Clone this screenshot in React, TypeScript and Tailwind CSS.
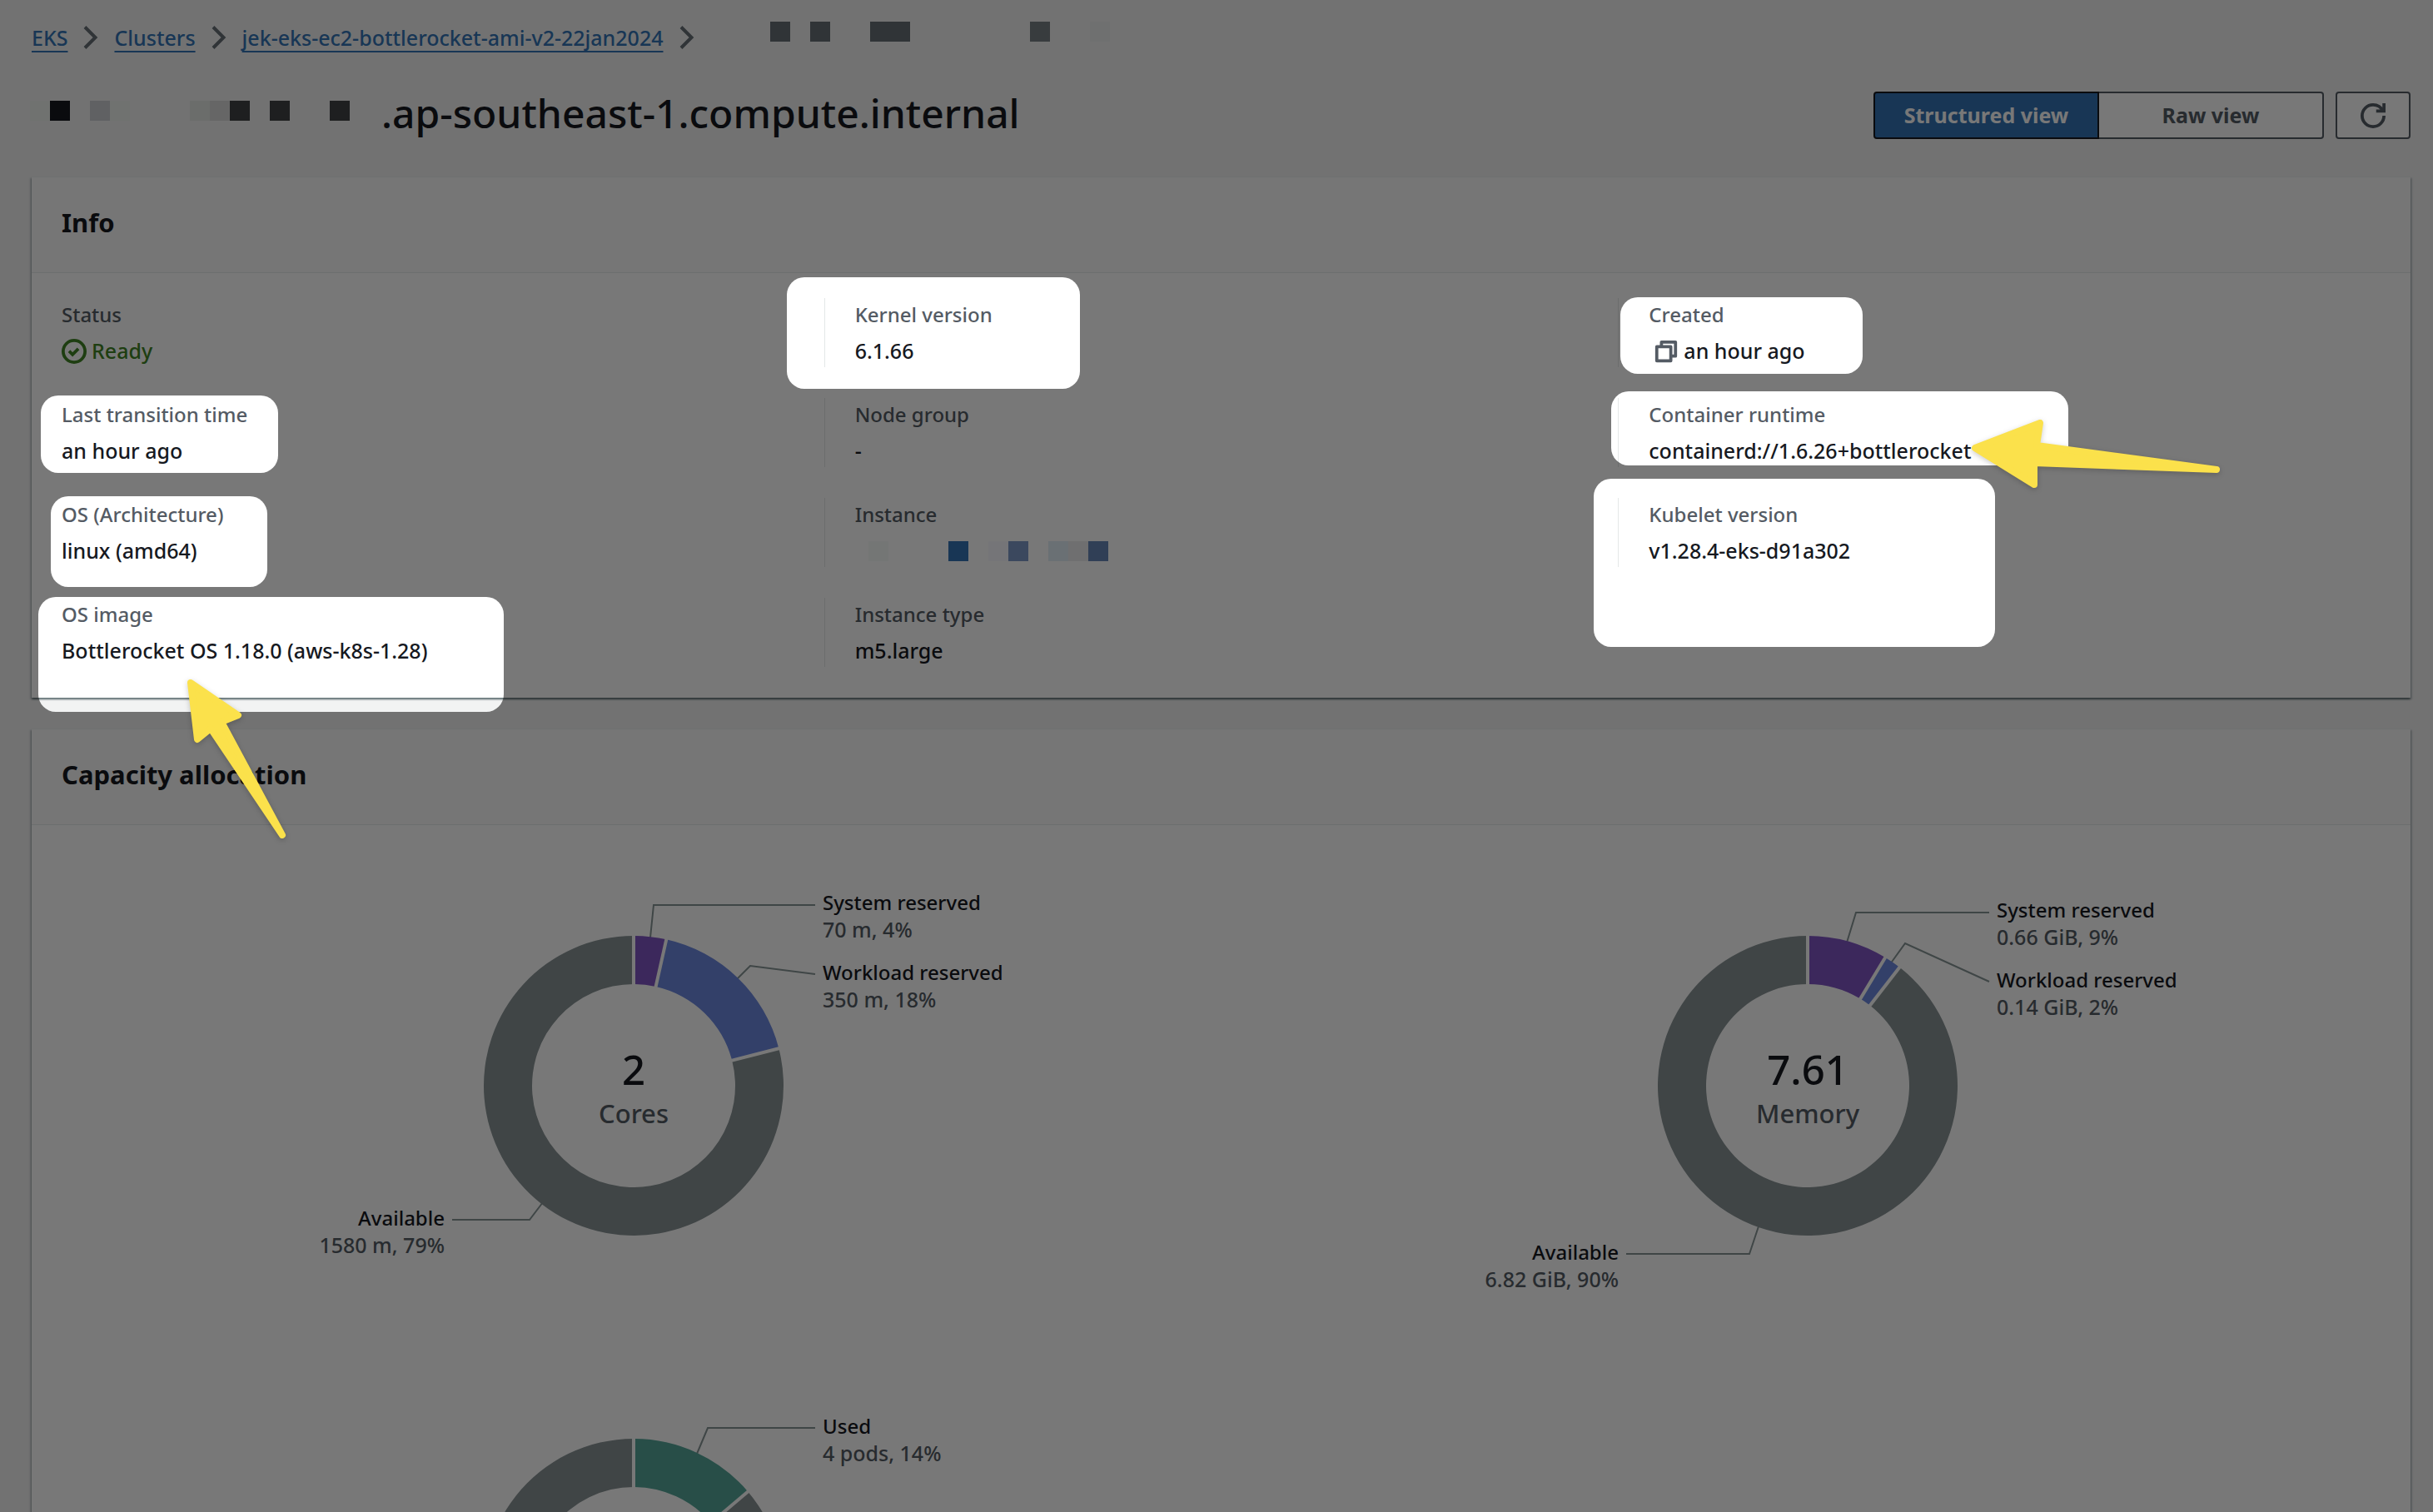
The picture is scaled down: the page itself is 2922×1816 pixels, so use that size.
import React from "react";

/* ---------- icons ---------- */

function ChevronIcon() {
  return (
    <svg className="h-7 w-[18px] shrink-0" viewBox="0 0 18 28" fill="none" stroke="#666f75" strokeWidth="4" aria-hidden="true">
      <path d="M2 1.5 14.5 14 2 26.500" />
    </svg>
  );
}

function RefreshIcon() {
  return (
    <svg className="size-[30px]" viewBox="0 0 16 16" fill="none" stroke="#545b64" strokeWidth="2" aria-hidden="true">
      <path d="M10 5h5V0" />
      <path d="M15 8a7 7 0 0 1-14 0 7 7 0 0 1 7-7c2.800 0 5.200 1.600 6.300 4" />
    </svg>
  );
}

function SuccessIcon() {
  return (
    <svg className="size-[30px]" viewBox="0 0 16 16" fill="none" stroke="#408426" strokeWidth="2" aria-hidden="true">
      <circle cx="8" cy="8" r="7" />
      <path d="m4.800 7.800 2.200 2.200 3.700-3.700" />
    </svg>
  );
}

function CopyIcon() {
  return (
    <svg className="size-[30px]" viewBox="0 0 16 16" fill="none" stroke="#545b64" strokeWidth="2" strokeLinejoin="round" aria-hidden="true">
      <path d="M2 5h9v9H2z" />
      <path d="M5 5V2h9v9h-3" />
    </svg>
  );
}

/* ---------- pixelated (redacted) text ---------- */

const T = "transparent";

function Mosaic({ cells }: { cells: string[] }) {
  return (
    <span className="flex shrink-0" aria-hidden="true">
      {cells.map((color, i) => (
        <span key={i} className="size-6" style={{ backgroundColor: color }} />
      ))}
    </span>
  );
}

const crumbCells = ["#666f75", T, "#666f75", T, T, "#666f75", "#666f75", T, T, T, T, T, T, "#777f84", T, T, "#ebeeee"];
const titleCells = ["#eef2ef", "#16191f", T, "#cdced2", "#eef2ef", T, T, T, "#e4e8e4", "#d8d9d9", "#404245", T, "#404245", T, T, "#404245", T];
const instanceCells = ["#f6faf8", T, T, T, "#3373b5", T, "#f9f9ff", "#7e99c8", T, "#e2eef6", "#ececee", "#6686b7"];

/* ---------- panels ---------- */

function Card({ title, children }: { title: string; children: React.ReactNode }) {
  return (
    <section className="border-t border-[#eaeded] bg-white shadow-[0_2px_2px_0_rgba(0,28,36,0.45),2px_2px_2px_0_rgba(0,28,36,0.15),-2px_2px_2px_0_rgba(0,28,36,0.15)]">
      <header className="border-b border-[#e6e9e9] bg-[#fafafa] px-9 pt-[34px] pb-10">
        <h2 className="text-[31px] leading-10 font-bold">{title}</h2>
      </header>
      {children}
    </section>
  );
}

function Field({ label, children, divided = false }: { label: string; children: React.ReactNode; divided?: boolean }) {
  return (
    <div className={divided ? "-ml-[38px] border-l border-[#e4e7e7] pl-9" : ""}>
      <dt className="mb-1 text-[24px] leading-10 text-[#545b64]">{label}</dt>
      <dd className="flex h-[39px] items-center leading-[39px]">{children}</dd>
    </div>
  );
}

/* ---------- donut charts ---------- */

type Slice = { value: number; color: string };
type Callout = { name: string; detail: string; x: number; y: number; line: string; end?: boolean };

const CX = 600;
const CY = 284;
const R_OUT = 180;
const R_IN = 122;

function point(r: number, turn: number) {
  const a = turn * 2 * Math.PI;
  return `${(CX + r * Math.sin(a)).toFixed(2)} ${(CY - r * Math.cos(a)).toFixed(2)}`;
}

function ringPath(from: number, to: number) {
  const large = to - from > 0.5 ? 1 : 0;
  return `M${point(R_OUT, from)}A${R_OUT} ${R_OUT} 0 ${large} 1 ${point(R_OUT, to)}L${point(R_IN, to)}A${R_IN} ${R_IN} 0 ${large} 0 ${point(R_IN, from)}Z`;
}

function Donut({ slices, callouts, label, total, unit }: { slices: Slice[]; callouts: Callout[]; label: string; total?: string; unit?: string }) {
  const sum = slices.reduce((s, x) => s + x.value, 0);
  const starts = slices.map((_, i) => slices.slice(0, i).reduce((s, x) => s + x.value, 0) / sum);
  return (
    <svg className="mx-auto w-[1201px] max-w-full" viewBox="0 0 1201 568" role="img" aria-label={label}>
      {callouts.map((c) => (
        <path key={c.name} d={c.line} fill="none" stroke="#879596" strokeWidth="2" />
      ))}
      {slices.map((s, i) => (
        <path key={i} d={ringPath(starts[i], starts[i] + s.value / sum)} fill={s.color} />
      ))}
      {starts.map((t, i) => (
        <path key={i} d={`M${point(R_IN - 2, t)}L${point(R_OUT + 2, t)}`} stroke="#ffffff" strokeWidth="4" />
      ))}
      {total && <text x={CX} y="283" textAnchor="middle" fontSize="49" fill="#16191f">{total}</text>}
      {unit && <text x={CX} y="329" textAnchor="middle" fontSize="31" fill="#545b64">{unit}</text>}
      {callouts.map((c) => (
        <g key={c.name} textAnchor={c.end ? "end" : "start"}>
          <text x={c.x} y={c.y} fontSize="24" fill="#16191f">{c.name}</text>
          <text x={c.x} y={c.y + 33} fontSize="25" fill="#545b64">{c.detail}</text>
        </g>
      ))}
    </svg>
  );
}

const SYSTEM = "#8055c4";
const WORKLOAD = "#6c88df";
const USED = "#55a699";
const FREE = "#889395";

/* ---------- spotlight annotations ---------- */

const spots = [
  { x: 49, y: 475, w: 285, h: 93 },
  { x: 61, y: 596, w: 260, h: 109 },
  { x: 46, y: 717, w: 559, h: 138 },
  { x: 945, y: 333, w: 352, h: 134 },
  { x: 1946, y: 357, w: 291, h: 92 },
  { x: 1935, y: 470, w: 549, h: 89 },
  { x: 1914, y: 575, w: 482, h: 202 },
];

function Annotations() {
  return (
    <svg className="pointer-events-none absolute inset-0 h-full w-full" aria-hidden="true">
      <defs>
        <mask id="spotlight">
          <rect width="100%" height="100%" fill="#fff" />
          {spots.map((s) => (
            <rect key={s.y} x={s.x} y={s.y} width={s.w} height={s.h} rx="21" fill="#000" />
          ))}
        </mask>
      </defs>
      <rect width="100%" height="100%" fill="#000" fillOpacity="0.53" mask="url(#spotlight)" />
      <g fill="#fbe14b" stroke="#fbe14b" strokeWidth="8" strokeLinejoin="round" className="drop-shadow-[0_2px_3px_rgba(0,0,0,0.2)]">
        <path d="M229 820 286 859 266 867 339 1003 253 875 237 888Z" />
        <path d="M2372 538 2450 508 2446 535 2662 564 2443 556 2443 582Z" />
      </g>
    </svg>
  );
}

/* ---------- page ---------- */

const link = "text-[#3373b5] underline decoration-2 underline-offset-[6px] [text-decoration-skip-ink:none]";

export default function App() {
  return (
    <div className="relative h-screen overflow-hidden bg-[#f2f3f3] pr-[27px] pl-[38px] font-['Noto_Sans',sans-serif] text-[25px] font-medium text-[#16191f]">
      <nav className="flex items-center gap-[19px] pt-[26px] leading-[38px]" aria-label="Breadcrumb">
        <a className={link} href="#eks">EKS</a>
        <ChevronIcon />
        <a className={link} href="#clusters">Clusters</a>
        <ChevronIcon />
        <a className={link} href="#cluster">jek-eks-ec2-bottlerocket-ami-v2-22jan2024</a>
        <ChevronIcon />
        <span className="ml-[72px] self-start">
          <Mosaic cells={crumbCells} />
        </span>
      </nav>

      <div className="mt-[42px] flex items-start justify-between">
        <div className="-ml-0.5 flex items-start gap-3.5">
          <span className="pt-[15px]">
            <Mosaic cells={titleCells} />
          </span>
          <h1 className="text-[48px] leading-[60px]">.ap-southeast-1.compute.internal</h1>
        </div>
        <div className="flex gap-3.5 pt-1">
          <div className="flex">
            <button type="button" aria-pressed="true" className="h-[57px] w-[271px] rounded-l-[4px] border-2 border-[#16191f] bg-[#3373b5] font-bold text-white">
              Structured view
            </button>
            <button type="button" aria-pressed="false" className="h-[57px] w-[270px] rounded-r-[4px] border-2 border-l-0 border-[#545b64] bg-white font-bold text-[#545b64]">
              Raw view
            </button>
          </div>
          <button type="button" aria-label="Refresh" className="flex h-[57px] w-[90px] items-center justify-center rounded-[4px] border-2 border-[#545b64] bg-white">
            <RefreshIcon />
          </button>
        </div>
      </div>

      <main className="mt-[45px] flex flex-col gap-[37px]">
        <Card title="Info">
          <div className="grid grid-cols-3 gap-x-[76px] px-9 pt-[30px] pb-[37px]">
            <dl className="flex flex-col gap-[37px]">
              <Field label="Status">
                <span className="flex items-center gap-1.5 text-[#408426]">
                  <SuccessIcon />
                  Ready
                </span>
              </Field>
              <Field label="Last transition time">an hour ago</Field>
              <Field label="OS (Architecture)">linux (amd64)</Field>
              <Field label="OS image">Bottlerocket OS 1.18.0 (aws-k8s-1.28)</Field>
            </dl>
            <dl className="flex flex-col gap-[37px]">
              <Field divided label="Kernel version">6.1.66</Field>
              <Field divided label="Node group">-</Field>
              <Field divided label="Instance">
                <span className="pl-4">
                  <Mosaic cells={instanceCells} />
                </span>
              </Field>
              <Field divided label="Instance type">m5.large</Field>
            </dl>
            <dl className="flex flex-col gap-[37px]">
              <Field divided label="Created">
                <span className="flex items-center gap-1.5 pl-1.5">
                  <CopyIcon />
                  an hour ago
                </span>
              </Field>
              <Field divided label="Container runtime">containerd://1.6.26+bottlerocket</Field>
              <Field divided label="Kubelet version">v1.28.4-eks-d91a302</Field>
            </dl>
          </div>
        </Card>

        <Card title="Capacity allocation">
          <div className="grid grid-cols-2 gap-9 px-9 pt-[29px]">
            <Donut
              label="CPU capacity"
              total="2"
              unit="Cores"
              slices={[
                { value: 70, color: SYSTEM },
                { value: 350, color: WORKLOAD },
                { value: 1580, color: FREE },
              ]}
              callouts={[
                { name: "System reserved", detail: "70 m, 4%", x: 827, y: 73, line: "M620 106 624 67H818" },
                { name: "Workload reserved", detail: "350 m, 18%", x: 827, y: 157, line: "M723 157 740 140 818 150" },
                { name: "Available", detail: "1580 m, 79%", x: 373, y: 452, line: "M491 424 475 445H382", end: true },
              ]}
            />
            <Donut
              label="Memory capacity"
              total="7.61"
              unit="Memory"
              slices={[
                { value: 0.66, color: SYSTEM },
                { value: 0.14, color: WORKLOAD },
                { value: 6.82, color: FREE },
              ]}
              callouts={[
                { name: "System reserved", detail: "0.66 GiB, 9%", x: 827, y: 82, line: "M647 112 658 76H818" },
                { name: "Workload reserved", detail: "0.14 GiB, 2%", x: 827, y: 166, line: "M699 138 717 113 818 159" },
                { name: "Available", detail: "6.82 GiB, 90%", x: 373, y: 493, line: "M541 453 530 486H382", end: true },
              ]}
            />
            <Donut
              label="Pod capacity"
              slices={[
                { value: 4, color: USED },
                { value: 25, color: FREE },
              ]}
              callouts={[{ name: "Used", detail: "4 pods, 14%", x: 827, y: 98, line: "M676 122 689 91H818" }]}
            />
          </div>
        </Card>
      </main>

      <Annotations />
    </div>
  );
}
